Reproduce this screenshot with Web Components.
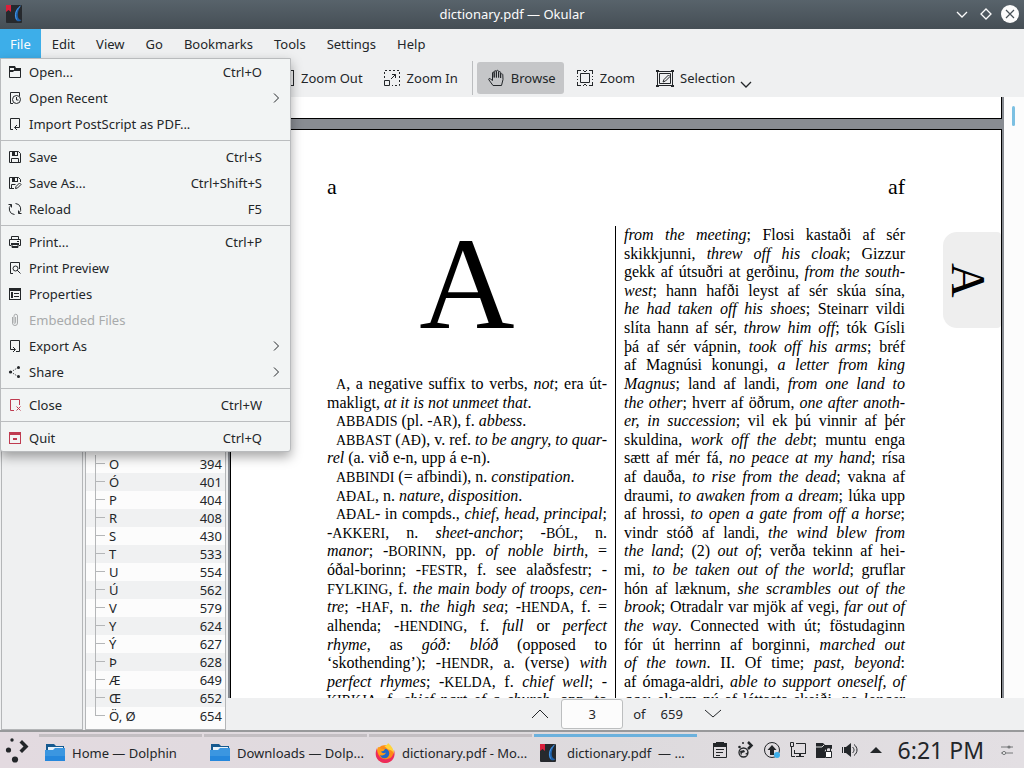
<!DOCTYPE html>
<html lang="en">
<head>
<meta charset="utf-8">
<title>dictionary.pdf — Okular</title>
<style>
  body {
    margin: 0;
    font: 13px/18px "Noto Sans", sans-serif;
    color: #232629;
    background: #eff0f1;
  }
</style>
</head>
<body>
<okular-window></okular-window>

<script>
const ICONS = {
  open: '<path d="M2.5 3.5h4l1 1h6v9h-11z" fill="none" stroke="currentColor"/><path d="M2 2h6l1 2h5v3H7L6 8H2z"/><path d="M3 4.500h4M3 5.500h4" stroke="#f2f4f4"/>',
  recent: '<path d="M6 13.500H3.500v-11h9V6" fill="none" stroke="currentColor"/><circle cx="9.500" cy="9.500" r="4" fill="none" stroke="currentColor"/><path d="M9.500 7v3h2" fill="none" stroke="currentColor"/>',
  import: '<path d="M6 13.500H3.500v-11h9V9M12.500 9v2.500H8M10 9l-2.500 2.500L10 14" fill="none" stroke="currentColor"/>',
  save: '<path d="M2.500 2.500h9l2 2v9h-11z" fill="none" stroke="currentColor"/><path d="M5 2h6v5H5z"/><path d="M8 3h2v3H8z" fill="#f2f4f4"/><path d="M4.500 13V9.500h7V13" fill="none" stroke="currentColor"/>',
  saveas: '<path d="M7 13.500H2.500v-11h9l2 2V7M4.500 13V9.500h4" fill="none" stroke="currentColor"/><path d="M5 2h6v5H5z"/><path d="M8 3h2v3H8z" fill="#f2f4f4"/><path d="M8.500 13.500l.5-2 3.500-3.500 1.500 1.500-3.500 3.500z" fill="none" stroke="currentColor"/>',
  reload: '<path d="M4.200 3.800A5.500 5.500 0 0 0 7.500 13.500M11.800 12.200A5.500 5.500 0 0 0 8.500 2.500M1.500 3.500h3v3M14.500 12.500h-3v-3" fill="none" stroke="currentColor"/>',
  print: '<path d="M4.500 5.500v-3h7v3M4 11.500H2.500v-6h11v6H12M5 13.500h6v-4H5z" fill="none" stroke="currentColor"/><path d="M4 9h8v2H4zM10 7h2v1h-2zM5 12h6v2H5z"/>',
  preview: '<path d="M6 13.500H3.500v-11h9V9" fill="none" stroke="currentColor"/><circle cx="8.500" cy="8.500" r="2.500" fill="none" stroke="currentColor"/><path d="M10 10l3.500 3.500" stroke="currentColor"/>',
  props: '<path d="M2 2h12v12H2zm1 3v8h10V5z" fill-rule="evenodd"/><path d="M4 6h2v6H4zM7 7h5v1H7zM7 10h5v1H7z"/>',
  clip: '<path d="M5.500 5v6a2.500 2.500 0 0 0 5 0V4a1.700 1.700 0 0 0-3.500 0v6.500a.8.800 0 0 0 1.600 0V5" fill="none" stroke="currentColor"/>',
  export: '<path d="M3.500 9V2.500h9v11H9M3.500 9v2.500H8M6 9l2.500 2.500L6 14" fill="none" stroke="currentColor"/>',
  share: '<circle cx="3.500" cy="8" r="1.600"/><circle cx="11.500" cy="3.500" r="1.500"/><circle cx="11.500" cy="12.500" r="1.500"/><path d="M4 8l7-4.500M4 8l7 4.500" stroke="currentColor" stroke-dasharray="1 1.300"/>',
  close: '<path d="M7 13.500H3.500v-11h9V8M9.500 9.500l4 4M13.500 9.500l-4 4" fill="none" stroke="currentColor"/>',
  quit: '<path d="M2 2h12v12H2zm1 3v8h10V5z" fill-rule="evenodd"/><path d="M6 8h4v2H6z"/>',
  arrow: '<path d="M6 3.500L10.500 8 6 12.500" fill="none" stroke="currentColor"/>',
  zoomout: '<path d="M0 .500h16M15.500 0v16M0 15.500h16" fill="none" stroke="currentColor"/>',
  zoomin: '<path d="M.500 10.500h5v5h-5z" fill="none" stroke="currentColor"/><path d="M.500 8V.500h15v15H8" fill="none" stroke="currentColor" stroke-dasharray="2 2"/><path d="M7 9l4.500-4.500M8 4.500h3.500V8" fill="none" stroke="currentColor"/>',
  hand: '<path d="M5 15.500L1 10c-1-1.500.5-2 1.500-1L4.500 10.500V3c0-1.200 1.500-1.200 1.700 0V7.500 1.800c0-1.500 2-1.500 2.200 0V7.500 1.300c0-1.300 2-1.300 2.200 0V7.500 2.500c0-1.300 1.900-1.300 2 0V8 4.500c0-1 2.400-1 2.200.5L15 9.500l-1.500 6z" fill="none" stroke="currentColor"/>',
  zoom: '<path d="M3.500 3.500h9v9h-9z" fill="none" stroke="currentColor"/><path d="M0 4V0h4v1H1v3zM12 0h4v4h-1V1h-3zM0 12h1v3h3v1H0zM15 12h1v4h-4v-1h3zM6 0h1v1H6zM9 0h1v1H9zM6 15h1v1H6zM9 15h1v1H9zM0 6h1v1H0zM0 9h1v1H0zM15 6h1v1h-1zM15 9h1v1h-1zM7 1h2v1H7zM7 14h2v1H7z"/>',
  selection: '<path d="M1.500 1.500h15v14h-15zM3.500 3.500h11v10h-11z" fill="none" stroke="currentColor"/><path d="M0 0h3v2H0zM15 0h3v2h-3zM0 15h3v2H0zM15 15h3v2h-3z"/><path d="M7 12l1-2.500 4.500-4.500 1.500 1.500L9.500 11z" fill="#eff0f1" stroke="currentColor"/>',
  down: '<path d="M0 5l8 7 8-7" transform="translate(0 -1)" fill="none" stroke="currentColor"/>',
  up: '<path d="M0 12l8-8 8 8" fill="none" stroke="currentColor"/>',
  chevron: '<path d="M3 6l5 5 5-5" fill="none" stroke="currentColor" stroke-width="1.300"/>',
  diamond: '<path d="M8 3l5 5-5 5-5-5z" fill="none" stroke="currentColor" stroke-width="1.300"/>',
  closewin: '<circle cx="8" cy="8" r="9"/><path d="M4 4l8 8M12 4l-8 8" stroke="#475057" stroke-width="1.200"/>',
  okular: '<rect width="16" height="18" y="-1" rx="1" fill="#26292d"/><path d="M0-1h5v7L2.500 4 0 6z" fill="#d9203c"/><path d="M14.500 0C9 3 7.500 9 10 14c1.500 2 4 1.500 5.500 0-4 0-5.500-6-1-14z" fill="#1d5fa8"/><path d="M14.500 0C9.500 4 8.500 9 10.500 13.500" stroke="#4a9bea" fill="none"/>',
  launcher: '<path d="M16 2l6.500 6.500-6.500 6.500-2.500-2.500 4-4-4-4z"/><circle cx="6" cy="2" r="1.700"/><circle cx="2.500" cy="12" r="2.600"/><circle cx="9" cy="21.500" r="3.100"/>',
  folder: '<path d="M1 1h8l2 2h8v5H1z" fill="#15598f"/><path d="M3 4h15v4H3z" fill="#e9f3fb"/><path d="M0 7h8l2-2h10v13H0z" fill="#3b96e0"/><path d="M0 13h20v5H0z" fill="#2587dc"/>',
  firefox: '<circle cx="10" cy="11" r="9" fill="#ff8a16"/><path d="M2 5C-2 14 4 20 11 20c7-.5 10-7 8-13 0 7-5 10-10 9C4 15 2 10 2 5z" fill="#ed2b5c"/><path d="M8 2c3 2 5-1 5-2 4 3 6 7 6 11-1-3-3-4-4-4-2 0-4-3-7-5z" fill="#ffd43b"/><circle cx="9.500" cy="10.500" r="4.800" fill="#2367c7"/><path d="M3 4l4 2 3-.5c0 2-2 3-4 3 1 2 3 2 5 1-1 3-5 4-7 2C2 9 2 6 3 4z" fill="#ff9c18"/>',
  clipboard: '<path d="M1.500 1.500h13v14h-13z" fill="none" stroke="currentColor"/><path d="M4 0h8v1h3v4H1V1h3zM4 7h8v1H4zM4 10h7v1H4zM4 13h4v1H4z"/>',
  kde: '<path d="M10 0l3.500 3.500L10 7" fill="none" stroke="currentColor" stroke-width="2.500"/><circle cx="5" cy="1" r="1"/><circle cx="1.500" cy="5" r="1.300"/><circle cx="5.500" cy="10.500" r="4.500" fill="none" stroke="currentColor" stroke-width="1.300"/><path d="M2 9l4-1 1 2-3 1-1 3zM7 12l3-2v3z"/>',
  update: '<circle cx="8" cy="8" r="7.500" fill="none" stroke="currentColor"/><path d="M8 3l4.500 5H10v5H6V8H3.500z"/><circle cx="13" cy="13" r="3" fill="#3daee9"/>',
  network: '<path d="M6 1.500h9.500v10H4.500V8" fill="none" stroke="currentColor"/><path d="M.500.500h3v4h-3zM1.500 5v9.500H5" fill="none" stroke="currentColor"/><path d="M4 11h12v1H4zM9 12h2v2h3v1H6v-1h3z"/>',
  vault: '<path d="M0 1h7l2 2h7v4c-3-2-8 0-7 3v6H0z"/><path d="M9.500 9.500h6v6h-6zM10.500 9V7a2 2 0 0 1 4 0v2" fill="none" stroke="currentColor"/><path d="M10 10h5v5h-5z" fill="#fff"/><path d="M0 5h6l2-2" stroke="#ddd" fill="none"/>',
  sound: '<path d="M0 5h1v6H0zM2 5h2l5-4v14l-5-4H2z"/><path d="M10.500 5c2 2 2 4 0 6M12 2.500c4 3 4 8 0 11" fill="none" stroke="currentColor"/>',
  caret: '<path d="M2 11l6-6 6 6z"/>',
  tune: '<path d="M0 3h12M0 9h12" stroke="currentColor"/><circle cx="8" cy="3" r="1.600"/><circle cx="3" cy="9" r="1.600" fill="#eee" stroke="currentColor"/>',
};

// [icon, label, shortcut, kind]
const FILE_MENU = [
  ["open", "Open...", "Ctrl+O"],
  ["recent", "Open Recent", "", "sub"],
  ["import", "Import PostScript as PDF..."],
  null,
  ["save", "Save", "Ctrl+S"],
  ["saveas", "Save As...", "Ctrl+Shift+S"],
  ["reload", "Reload", "F5"],
  null,
  ["print", "Print...", "Ctrl+P"],
  ["preview", "Print Preview"],
  ["props", "Properties"],
  ["clip", "Embedded Files", "", "off"],
  ["export", "Export As", "", "sub"],
  ["share", "Share", "", "sub"],
  null,
  ["close", "Close", "Ctrl+W", "red"],
  null,
  ["quit", "Quit", "Ctrl+Q", "red"],
];

const CHAPTERS = [
  ["O", 394], ["Ó", 401], ["P", 404], ["R", 408], ["S", 430],
  ["T", 533], ["U", 554], ["Ú", 562], ["V", 579], ["Y", 624],
  ["Ý", 627], ["Þ", 628], ["Æ", 649], ["Œ", 652], ["Ö, Ø", 654],
];

// *italic*, _small capitals_, ">" indents the line, "|" leaves it ragged
const LEFT_COLUMN = [
  ">_A_, a negative suffix to verbs, *not*; era út-",
  "|makligt, *at it is not unmeet that*.",
  ">|_ABBADIS_ (pl. -_AR_), f. *abbess*.",
  ">_ABBAST_ (_AÐ_), v. ref. *to be angry, to quar-*",
  "|*rel* (a. við e-n, upp á e-n).",
  ">|_ABBINDI_ (= afbindi), n. *constipation*.",
  ">|_AÐAL_, n. *nature, disposition*.",
  ">_AÐAL_- in compds., *chief, head, principal*;",
  "-_AKKERI_, n. *sheet-anchor*; -_BÓL_, n.",
  "*manor*; -_BORINN_, pp. *of noble birth*, =",
  "óðal-borinn; -_FESTR_, f. see alaðsfestr; -",
  "_FYLKING_, f. *the main body of troops, cen-*",
  "*tre*; -_HAF_, n. *the high sea*; -_HENDA_, f. =",
  "alhenda; -_HENDING_, f. *full* or *perfect*",
  "*rhyme*, as *góð: blóð* (opposed to",
  "‘skothending’); -_HENDR_, a. (verse) *with*",
  "*perfect rhymes*; -_KELDA_, f. *chief well*; -",
  "_KIRKJA_, f. *chief part of a church*, opp. to",
];

const RIGHT_COLUMN = [
  "*from the meeting*; Flosi kastaði af sér",
  "skikkjunni, *threw off his cloak*; Gizzur",
  "gekk af útsuðri at gerðinu, *from the south-*",
  "*west*; hann hafði leyst af sér skúa sína,",
  "*he had taken off his shoes*; Steinarr vildi",
  "slíta hann af sér, *throw him off*; tók Gísli",
  "þá af sér vápnin, *took off his arms*; bréf",
  "af Magnúsi konungi, *a letter from king*",
  "*Magnus*; land af landi, *from one land to*",
  "*the other*; hverr af öðrum, *one after anoth-*",
  "*er, in succession*; vil ek þú vinnir af þér",
  "skuldina, *work off the debt*; muntu enga",
  "sætt af mér fá, *no peace at my hand*; rísa",
  "af dauða, *to rise from the dead*; vakna af",
  "draumi, *to awaken from a dream*; lúka upp",
  "af hrossi, *to open a gate from off a horse*;",
  "vindr stóð af landi, *the wind blew from*",
  "*the land*; (2) *out of*; verða tekinn af hei-",
  "mi, *to be taken out of the world*; gruflar",
  "hón af læknum, *she scrambles out of the*",
  "*brook*; Otradalr var mjök af vegi, *far out of*",
  "*the way*. Connected with út; föstudaginn",
  "fór út herrinn af borginni, *marched out*",
  "*of the town*. II. Of time; *past, beyond*:",
  "af ómaga-aldri, *able to support oneself, of*",
  "*age*; ek em nú af léttasta skeiði, *no longer*",
];

class BaseElement extends HTMLElement {
  connectedCallback() {
    if (this.shadowRoot) return;
    this.attachShadow({ mode: "open" });
    this.shadowRoot.innerHTML = `<style>${this.getStyles()}</style>${this.getTemplate()}`;
  }
}

class UiIcon extends BaseElement {
  getTemplate() {
    const w = this.getAttribute("size") || 16;
    return `<svg width="${w}" height="${w}" viewBox="0 0 ${w} ${w}" fill="currentColor" aria-hidden="true">${ICONS[this.getAttribute("name")]}</svg>`;
  }
  getStyles() {
    return `
      :host { display: block; flex: none; }
      svg { display: block; overflow: visible; }
    `;
  }
}
customElements.define("ui-icon", UiIcon);

class TitleBar extends BaseElement {
  getTemplate() {
    return `
      <ui-icon name="okular"></ui-icon>
      <span class="title"><slot></slot></span>
      <div class="buttons">
        <button aria-label="Minimize"><ui-icon name="chevron"></ui-icon></button>
        <button aria-label="Maximize"><ui-icon name="diamond"></ui-icon></button>
        <button aria-label="Close"><ui-icon name="closewin"></ui-icon></button>
      </div>
    `;
  }
  getStyles() {
    return `
      :host {
        display: grid;
        grid-template-columns: 1fr auto 1fr;
        align-items: center;
        height: 28px;
        padding: 0 6px 1px;
        color: #fcfcfc;
        background: linear-gradient(#58636b, #454e55);
      }
      .buttons { display: flex; gap: 8px; justify-self: end; }
      button { padding: 0; border: 0; background: none; color: inherit; }
    `;
  }
}
customElements.define("title-bar", TitleBar);

class MenuRow extends BaseElement {
  getTemplate() {
    const kind = this.getAttribute("kind");
    return `
      <button role="menuitem" ${kind === "off" ? "disabled" : ""}>
        <ui-icon class="${kind === "red" ? "red" : ""}" name="${this.getAttribute("icon")}"></ui-icon>
        <span class="label"><slot></slot></span>
        <span>${this.getAttribute("keys")}</span>
        ${kind === "sub" ? '<ui-icon class="sub" name="arrow"></ui-icon>' : ""}
      </button>
    `;
  }
  getStyles() {
    return `
      :host { display: block; }
      button {
        display: flex;
        align-items: center;
        gap: 6px;
        width: 100%;
        height: 26px;
        padding: 0 28px 0 6px;
        border: 0;
        background: none;
        font: inherit;
        color: inherit;
      }
      button:disabled { color: #a8aaab; }
      .label { flex: 1; text-align: left; }
      .red { color: #bf3b50; }
      .sub { margin-right: -22px; }
    `;
  }
}
customElements.define("menu-row", MenuRow);

class MenuBar extends BaseElement {
  getTemplate() {
    const names = ["File", "Edit", "View", "Go", "Bookmarks", "Tools", "Settings", "Help"];
    const rows = FILE_MENU.map((m) => m
      ? `<menu-row icon="${m[0]}" keys="${m[2] || ""}" kind="${m[3] || ""}">${m[1]}</menu-row>`
      : "<hr>");
    return `
      ${names.map((n, i) => `<button class="${i ? "" : "active"}">${n}</button>`).join("")}
      <div class="popup" role="menu">${rows.join("")}</div>
    `;
  }
  getStyles() {
    return `
      :host { display: flex; gap: 1px; position: relative; z-index: 2; height: 30px; }
      button {
        padding: 0 10px;
        border: 0;
        background: none;
        font: inherit;
        color: inherit;
      }
      .active { color: #fcfcfc; background: #3daee9; }
      .popup {
        position: absolute;
        top: 29px;
        left: 0;
        width: 289px;
        border: 1px solid #b9bbbd;
        border-radius: 0 0 3px 3px;
        background: #f2f4f4;
        box-shadow: 0 5px 12px rgba(0, 0, 0, .35);
      }
      hr { height: 1px; margin: 3px 0; border: 0; background: #bbbdbf; }
    `;
  }
}
customElements.define("menu-bar", MenuBar);

class ToolButton extends BaseElement {
  getTemplate() {
    const size = this.getAttribute("size") || 16;
    return `<button><ui-icon size="${size}" name="${this.getAttribute("icon")}"></ui-icon><slot></slot></button>`;
  }
  getStyles() {
    return `
      :host { display: block; }
      button {
        display: flex;
        align-items: center;
        gap: 7px;
        height: 32px;
        padding: 0 8px 0 11px;
        border: 0;
        border-radius: 3px;
        background: none;
        font: inherit;
        color: inherit;
      }
      :host([pressed]) button { background: #c5c6c8; }
    `;
  }
}
customElements.define("tool-button", ToolButton);

class ToolBar extends BaseElement {
  getTemplate() {
    return `
      <tool-button icon="zoomout">Zoom Out</tool-button>
      <tool-button icon="zoomin">Zoom In</tool-button>
      <span class="line"></span>
      <tool-button icon="hand" pressed>Browse</tool-button>
      <tool-button icon="zoom">Zoom</tool-button>
      <tool-button icon="selection" size="17">Selection</tool-button>
      <button class="more" aria-label="Selection tools"><ui-icon name="chevron"></ui-icon></button>
    `;
  }
  getStyles() {
    return `
      :host {
        display: flex;
        align-items: center;
        gap: 2px;
        height: 38px;
        padding-left: 267px;
      }
      .line { width: 1px; height: 34px; margin: 0 2px 0 4px; background: #bbbdbf; }
      .more { align-self: end; margin-left: -7px; padding: 0 0 5px; border: 0; background: none; color: inherit; }
    `;
  }
}
customElements.define("tool-bar", ToolBar);

class ContentsTree extends BaseElement {
  getTemplate() {
    const rows = CHAPTERS.map(([name, page]) => `<li><span>${name}</span><span>${page}</span></li>`);
    return `<ul>${rows.join("")}</ul>`;
  }
  getStyles() {
    return `
      :host {
        display: flex;
        flex-direction: column;
        justify-content: flex-end;
        box-sizing: border-box;
        width: 141px;
        padding-bottom: 4px;
        border: 1px solid #b4b6b8;
        background: #fcfcfc;
      }
      ul { margin: 0; padding: 0; list-style: none; }
      li {
        display: flex;
        justify-content: space-between;
        height: 18px;
        padding: 0 3px 0 9px;
        line-height: 18px;
        background: linear-gradient(#b4b6b8, #b4b6b8) 9px 0 / 1px 100% no-repeat;
      }
      li:nth-child(even) { background-color: #f0f1f2; }
      li:last-child { background-size: 1px 9px; }
      /* branch lines of the tree */
      li::before {
        content: "";
        width: 10px;
        height: 8px;
        margin-right: 4px;
        border-bottom: 1px solid #b4b6b8;
      }
      li span:first-of-type { flex: 1; }
    `;
  }
}
customElements.define("contents-tree", ContentsTree);

function formatLine(source) {
  const indent = source.startsWith(">");
  let text = source.replace(/^>/, "");
  const ragged = text.startsWith("|");
  text = text.replace(/^\|/, "")
    .replace(/\*([^*]+)\*/g, "<i>$1</i>")
    .replace(/_([^_]+)_/g, "<small>$1</small>");
  return `<p class="${indent ? "indent" : ""} ${ragged ? "ragged" : ""}">${text}</p>`;
}

class PageView extends BaseElement {
  getTemplate() {
    return `
      <div class="pages">
        <div class="previous"></div>
        <article>
          <header><span>a</span><span>af</span></header>
          <div class="columns">
            <section><h1>A</h1>${LEFT_COLUMN.map(formatLine).join("")}</section>
            <section>${RIGHT_COLUMN.map(formatLine).join("")}</section>
          </div>
          <span class="thumb">A</span>
        </article>
      </div>
      <div class="scroll"><span></span></div>
    `;
  }
  getStyles() {
    return `
      :host { display: flex; flex: 1; min-height: 0; overflow: hidden; }
      .pages { flex: 1; min-width: 0; padding: 0 2px; background: #888c92; }
      .previous { height: 21px; margin-bottom: 10px; border: 1px solid #000; border-top: 0; background: #fff; }
      article {
        position: relative;
        height: 1000px;
        padding: 0 96px;
        border: 1px solid #000;
        background: #fff;
        color: #000;
        font: 16px/18px "Liberation Serif", serif;
      }
      header {
        display: flex;
        justify-content: space-between;
        padding: 44px 0 26px;
        font-size: 22px;
        line-height: 26px;
      }
      .columns { display: grid; grid-template-columns: 1fr 1fr; }
      section {
        display: grid;
        grid-template-rows: repeat(26, minmax(0, 1fr));
        grid-template-columns: minmax(0, 1fr);
        height: 484px;
        padding-left: 8px;
      }
      section:first-child { padding: 0 8px 0 0; border-right: 1px solid #000; }
      h1 {
        grid-row: span 8;
        margin: 0;
        font-size: 132px;
        line-height: 116px;
        font-weight: normal;
        text-align: center;
      }
      p { margin: 0; white-space: nowrap; text-align-last: justify; }
      .indent { padding-left: 9px; }
      .ragged { text-align-last: left; }
      small { font-size: 14px; }
      .thumb {
        position: absolute;
        top: 102px;
        right: 0;
        box-sizing: border-box;
        width: 58px;
        height: 96px;
        border-radius: 14px 4px 4px 14px;
        background: #eee;
        font-size: 48px;
        line-height: 66px;
        text-align: center;
        writing-mode: vertical-rl;
      }
      .scroll { width: 20px; background: #fcfcfc; }
      .scroll span { display: block; width: 3px; height: 20px; margin: 9px 0 0 8px; border-radius: 2px; background: #7cc0e2; }
    `;
  }
}
customElements.define("page-view", PageView);

class PageNav extends BaseElement {
  getTemplate() {
    return `
      <button aria-label="Previous page"><ui-icon name="up"></ui-icon></button>
      <input aria-label="Page" value="3">
      <span>of</span>
      <span class="total">659</span>
      <button aria-label="Next page"><ui-icon name="down"></ui-icon></button>
    `;
  }
  getStyles() {
    return `
      :host { display: flex; align-items: center; justify-content: center; height: 32px; padding-left: 1px; }
      button { padding: 0; border: 0; background: none; color: inherit; }
      input {
        box-sizing: border-box;
        width: 62px;
        height: 30px;
        margin: 0 10px 0 13px;
        border: 1px solid #bcbebf;
        border-radius: 3px;
        background: #fcfcfc;
        font: inherit;
        color: inherit;
        text-align: center;
      }
      .total { margin: 0 22px 0 15px; }
    `;
  }
}
customElements.define("page-nav", PageNav);

class TaskButton extends BaseElement {
  getTemplate() {
    return `<button><ui-icon size="${this.getAttribute("size")}" name="${this.getAttribute("icon")}"></ui-icon><slot></slot></button>`;
  }
  getStyles() {
    return `
      :host { display: block; width: 163px; flex: 0 1 auto; }
      button {
        display: flex;
        align-items: center;
        box-sizing: border-box;
        width: 100%;
        height: 34px;
        padding: 0 6px;
        border: 0;
        border-top: 3px solid #c3bec2;
        background: none;
        font: inherit;
        color: inherit;
        white-space: pre;
      }
      ui-icon { width: 27px; }
      :host([active]) button { border-color: #6bb1dd; }
    `;
  }
}
customElements.define("task-button", TaskButton);

class TaskBar extends BaseElement {
  getTemplate() {
    const tray = ["clipboard", "kde", "update", "network", "vault", "sound", "caret"];
    return `
      <button class="start" aria-label="Applications"><ui-icon size="24" name="launcher"></ui-icon></button>
      <task-button icon="folder" size="20">Home — Dolphin</task-button>
      <task-button icon="folder" size="20">Downloads — Dolp...</task-button>
      <task-button icon="firefox" size="20">dictionary.pdf - Mo...</task-button>
      <task-button icon="okular" size="16" active>dictionary.pdf  — ...</task-button>
      <div class="tray">${tray.map((n) => `<ui-icon name="${n}"></ui-icon>`).join("")}</div>
      <time>6:21 PM</time>
      <ui-icon class="tune" size="12" name="tune"></ui-icon>
    `;
  }
  getStyles() {
    return `
      :host {
        display: flex;
        align-items: center;
        gap: 2px;
        box-sizing: border-box;
        height: 38px;
        border-top: 2px solid #98999b;
        background: linear-gradient(90deg, #e3dae0, #dddadd 60%, #e3dfe3);
      }
      .start { width: 37px; padding: 0 0 0 6px; border: 0; background: none; color: inherit; }
      task-button { align-self: end; }
      .tray { display: flex; flex: 1; justify-content: space-between; margin: 0 12px 0 13px; }
      time { font-size: 23px; line-height: 30px; }
      .tune { margin: 0 11px 0 15px; color: #77797b; }
    `;
  }
}
customElements.define("task-bar", TaskBar);

class OkularWindow extends BaseElement {
  getTemplate() {
    return `
      <title-bar>dictionary.pdf — Okular</title-bar>
      <menu-bar></menu-bar>
      <tool-bar></tool-bar>
      <main>
        <aside></aside>
        <contents-tree></contents-tree>
        <div class="document">
          <page-view></page-view>
          <page-nav></page-nav>
        </div>
      </main>
      <task-bar></task-bar>
    `;
  }
  getStyles() {
    return `
      :host { display: flex; flex-direction: column; height: 100vh; overflow: hidden; }
      main { display: flex; flex: 1; min-height: 0; }
      aside { width: 80px; margin: 0 2px 0 1px; border: 1px solid #b4b6b8; }
      .document { display: flex; flex: 1; flex-direction: column; min-width: 0; padding-left: 2px; }
    `;
  }
}
customElements.define("okular-window", OkularWindow);
</script>
</body>
</html>
